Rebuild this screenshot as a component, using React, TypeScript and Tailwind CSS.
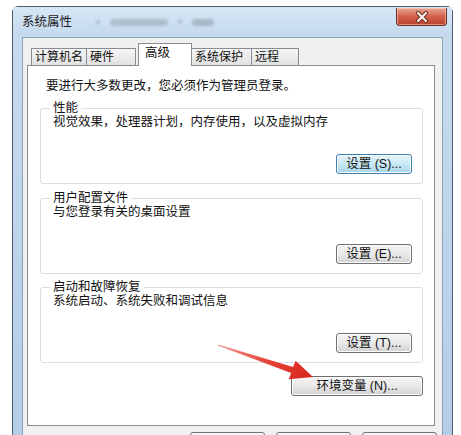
import React from 'react'

const font = { fontFamily: '"Liberation Sans", "Noto Sans CJK SC", sans-serif' }

const tabs = [
  { label: '计算机名', w: 'w-[56px]' },
  { label: '硬件', w: 'w-[50px] mr-[2px]' },
  { label: '高级', w: 'w-[54px]', active: true },
  { label: '系统保护', w: 'w-[61px]' },
  { label: '远程', w: 'w-[48px]' },
]

const groups = [
  { title: '性能', desc: '视觉效果，处理器计划，内存使用，以及虚拟内存', btn: '设置 (S)...', focus: true, mt: 'mt-[5px]' },
  { title: '用户配置文件', desc: '与您登录有关的桌面设置', btn: '设置 (E)...', mt: 'mt-[6px]' },
  { title: '启动和故障恢复', desc: '系统启动、系统失败和调试信息', btn: '设置 (T)...', mt: 'mt-[5px]' },
]

const WinButton: React.FC<{ children?: React.ReactNode; className?: string; focus?: boolean }> = ({
  children,
  className,
  focus,
}) => (
  <div
    className={
      'flex h-[20px] items-center justify-center rounded-[3px] border text-[12.5px] leading-[17px] whitespace-nowrap text-[#111] shadow-[inset_0_0_0_1px_#fbfbfb] ' +
      (focus
        ? 'border-[#3c7fb1] bg-linear-to-b from-[#e3f4fa] via-[#c9e9f4] to-[#a5d6ea] '
        : 'border-[#707070] bg-linear-to-b from-[#f4f4f4] via-[#e9e9e9] to-[#d2d2d2] ') +
      (className || '')
    }
  >
    {children}
  </div>
)

const GroupBox: React.FC<{ g: (typeof groups)[0] }> = ({ g }) => (
  <fieldset
    className={`ml-[12px] w-[383px] rounded-[3px] border border-[#d5dfe5] pl-[12px] pr-[10px] pb-[9px] ${g.mt}`}
  >
    <legend className="ml-[-3px] px-[3px] text-[12.5px] leading-[17px] text-[#111]">{g.title}</legend>
    <div className="-mt-[3px] text-[12.5px] leading-[17px] text-[#111]">{g.desc}</div>
    <div className="mt-[23px] flex justify-end">
      <WinButton className="w-[76px]" focus={g.focus}>
        {g.btn}
      </WinButton>
    </div>
  </fieldset>
)

export default function App() {
  return (
    <div className="relative h-[435px] w-[461px] overflow-hidden bg-white" style={font}>
      {/* window */}
      <div className="ml-[12px] mt-[6px] w-[441px] rounded-t-[6px] border border-[#4f5d6e] bg-linear-to-b from-[#c9dcef] via-[#bdd4eb] to-[#b3cde6]">
        {/* title bar */}
        <div className="flex h-[30px] items-start bg-linear-to-b from-[#d6e6f5] to-[#c4d9ee] pl-[9px]">
          <span className="self-center text-[12.5px] leading-[17px] text-[#1b1b1b]">系统属性</span>
          <div className="ml-[24px] flex items-center gap-[10px] self-center opacity-60 blur-[1.5px]">
            <div className="h-[4px] w-[4px] rounded-full bg-[#8b98a8]" />
            <div className="h-[7px] w-[58px] rounded bg-[#9aa7b6]" />
            <div className="h-[4px] w-[4px] rounded-full bg-[#8b98a8]" />
            <div className="h-[7px] w-[22px] rounded bg-[#8f9cab]" />
          </div>
          <div className="ml-auto mr-[5px] mt-px flex h-[18px] w-[51px] items-center justify-center rounded-b-[4px] border border-t-0 border-[#6b3329] bg-linear-to-b from-[#e9a897] via-[#d2604a] to-[#b8412c] shadow-[inset_0_0_0_1px_rgba(255,220,210,0.5)]">
            <svg width="14" height="12" viewBox="0 0 14 12">
              <path d="M3 2 L11 10 M11 2 L3 10" stroke="#6b2a20" strokeWidth="4" strokeLinecap="round" />
              <path d="M3 2 L11 10 M11 2 L3 10" stroke="#fff4f0" strokeWidth="2.2" strokeLinecap="round" />
            </svg>
          </div>
        </div>

        {/* client area */}
        <div className="ml-[9px] w-[421px] border border-[#8fa3b8] bg-[#f0f0f0] pl-[4px] pt-[5px]">
          {/* tab strip */}
          <div className="flex h-[22px] items-end pl-[5px]">
            {tabs.map((t) =>
              t.active ? (
                <div
                  key={t.label}
                  className={`relative z-10 -mb-px flex h-[23px] items-start whitespace-nowrap border border-b-0 border-[#898c95] bg-white pl-[6px] pt-[1px] text-[12.5px] leading-[17px] text-[#111] ${t.w}`}
                >
                  {t.label}
                </div>
              ) : (
                <div
                  key={t.label}
                  className={`-ml-px flex h-[17px] items-center whitespace-nowrap border border-b-0 border-[#898c95] bg-linear-to-b from-[#f5f5f5] to-[#e1e1e1] pl-[3px] text-[12px] leading-[15px] text-[#111] ${t.w}`}
                >
                  {t.label}
                </div>
              ),
            )}
          </div>

          {/* tab page */}
          <div className="h-[361px] w-[408px] border border-[#898c95] bg-white pt-[12px]">
            <div className="pl-[18px] text-[12.5px] leading-[17px] text-[#111]">
              要进行大多数更改，您必须作为管理员登录。
            </div>
            {groups.map((g) => (
              <GroupBox key={g.title} g={g} />
            ))}
            <div className="mt-[13px] flex w-[395px] justify-end">
              <WinButton className="w-[132px]">环境变量 (N)...</WinButton>
            </div>
          </div>

          {/* dialog buttons, only their tops are in view */}
          <div className="mt-[6px] flex gap-[11px] pl-[163px]">
            <WinButton className="w-[75px]" />
            <WinButton className="w-[75px]" />
            <WinButton className="w-[75px]" />
          </div>
        </div>
      </div>

      {/* red arrow annotation */}
      <svg className="pointer-events-none absolute left-0 top-0" width="461" height="435">
        <defs>
          <linearGradient id="arrowFill" x1="218" y1="345" x2="313" y2="377" gradientUnits="userSpaceOnUse">
            <stop offset="0" stopColor="#f19a93" />
            <stop offset="0.5" stopColor="#e6453a" />
            <stop offset="1" stopColor="#d8261c" />
          </linearGradient>
        </defs>
        <polygon
          points="218.2,344.4 293.1,366.9 295.6,360.8 313,377 288.7,379.2 291.1,373.1 217.8,345.6"
          fill="url(#arrowFill)"
        />
      </svg>
    </div>
  )
}
